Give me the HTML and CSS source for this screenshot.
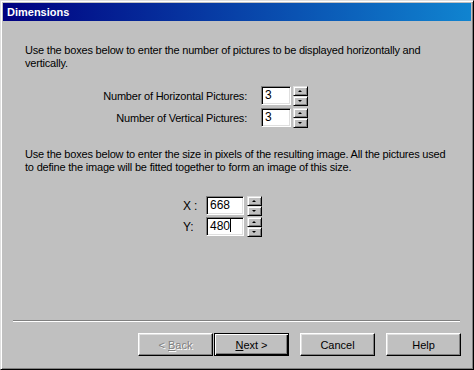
FILE: index.html
```html
<!DOCTYPE html>
<html lang="en">
<head>
  <meta charset="UTF-8">
  <title>Dimensions</title>
  <link rel="stylesheet" href="styles.css">
</head>
<body>
  <div class="window">
    <div class="titlebar">Dimensions</div>

    <div class="content">
      <p class="text">Use the boxes below to enter the number of pictures to be displayed horizontally and vertically.</p>

      <div class="fields">
        <label class="field-label">Number of Horizontal Pictures:</label>
        <div class="textbox">3</div>
        <div class="spinner"><span class="spin up"></span><span class="spin down"></span></div>

        <label class="field-label">Number of Vertical Pictures:</label>
        <div class="textbox">3</div>
        <div class="spinner"><span class="spin up"></span><span class="spin down"></span></div>
      </div>

      <p class="text text-second">Use the boxes below to enter the size in pixels of the resulting image. All the pictures used to define the image will be fitted together to form an image of this size.</p>

      <div class="size-fields">
        <label class="size-label">X :</label>
        <div class="textbox wide">668</div>
        <div class="spinner"><span class="spin up"></span><span class="spin down"></span></div>

        <label class="size-label">Y:</label>
        <div class="textbox wide">480<span class="caret"></span></div>
        <div class="spinner"><span class="spin up"></span><span class="spin down"></span></div>
      </div>
    </div>

    <div class="separator"></div>

    <div class="buttons">
      <button class="button disabled">&lt; <u>B</u>ack</button>
      <button class="button default"><u>N</u>ext &gt;</button>
      <button class="button gap">Cancel</button>
      <button class="button gap">Help</button>
    </div>
  </div>
</body>
</html>
```

FILE: styles.css
```css
body {
  margin: 0;
  background-color: #c0c0c0;
}

.window {
  width: 474px;
  height: 370px;
  box-sizing: border-box;
  background-color: #c0c0c0;
  border: 1px solid;
  border-color: #dfdfdf #000 #000 #dfdfdf;
  box-shadow: inset 1px 1px #fff, inset -1px -1px #808080;
  padding: 2px;
  display: flex;
  flex-direction: column;
  font-family: "Liberation Sans", Arial, sans-serif;
  font-size: 11px;
  letter-spacing: -0.2px;
  color: #000;
}

.titlebar {
  height: 18px;
  line-height: 18px;
  padding-left: 4px;
  background: linear-gradient(to right, #000080, #1084d0);
  color: #fff;
  font-weight: bold;
  font-size: 11px;
  letter-spacing: 0;
}

.content {
  flex: 1;
  padding: 0 20px 0 22px;
}

.text {
  margin: 23px 0 0;
  line-height: 13px;
}

.text-second {
  margin-top: 20px;
}

.fields {
  display: grid;
  grid-template-columns: 222px 30px 15px;
  grid-auto-rows: 20px;
  column-gap: 14px;
  row-gap: 2px;
  margin-top: 16px;
  align-items: start;
}

.fields .spinner {
  margin-left: -12px;
}

.field-label {
  text-align: right;
  line-height: 20px;
}

.size-fields {
  display: grid;
  grid-template-columns: 20px 38px 15px;
  grid-auto-rows: 20px;
  column-gap: 3px;
  row-gap: 1px;
  margin: 22px 0 0 158px;
  align-items: start;
}

.size-label {
  line-height: 20px;
  font-size: 12px;
}

.textbox {
  height: 19px;
  box-sizing: border-box;
  background-color: #fff;
  border: 1px solid;
  border-color: #808080 #fff #fff #808080;
  box-shadow: inset 1px 1px #000, inset -1px -1px #dfdfdf;
  padding-left: 3px;
  line-height: 17px;
  font-size: 12px;
  letter-spacing: 0;
}

.caret {
  display: inline-block;
  width: 1px;
  height: 13px;
  background-color: #000;
  vertical-align: -2px;
}

.spinner {
  display: flex;
  flex-direction: column;
  width: 15px;
  height: 20px;
}

.spin {
  position: relative;
  flex: 1;
  box-sizing: border-box;
  background-color: #c0c0c0;
  border: 1px solid;
  border-color: #dfdfdf #000 #000 #dfdfdf;
  box-shadow: inset 1px 1px #fff, inset -1px -1px #808080;
}

.spin::after {
  content: "";
  position: absolute;
  left: 4px;
  top: 3px;
  border-left: 2px solid transparent;
  border-right: 2px solid transparent;
}

.spin.up::after {
  border-bottom: 2px solid #000;
}

.spin.down::after {
  border-top: 2px solid #000;
}

.separator {
  margin: 0 11px 0 10px;
  height: 0;
  border-top: 1px solid #808080;
  border-bottom: 1px solid #fff;
}

.buttons {
  display: flex;
  justify-content: flex-end;
  padding: 11px 10px 11px 0;
}

.button {
  width: 75px;
  height: 23px;
  box-sizing: border-box;
  background-color: #c0c0c0;
  border: 1px solid;
  border-color: #fff #000 #000 #fff;
  box-shadow: inset -1px -1px #808080, inset 1px 1px #dfdfdf;
  font-family: "Liberation Sans", Arial, sans-serif;
  font-size: 11px;
  color: #000;
  padding: 0;
}

.button.default {
  margin-left: 1px;
  border: 1px solid #000;
  box-shadow: inset 1px 1px #fff, inset -1px -1px #000, inset -2px -2px #808080;
}

.button.disabled {
  color: #808080;
  text-shadow: 1px 1px #fff;
}

.button.gap {
  margin-left: 11px;
}
```
